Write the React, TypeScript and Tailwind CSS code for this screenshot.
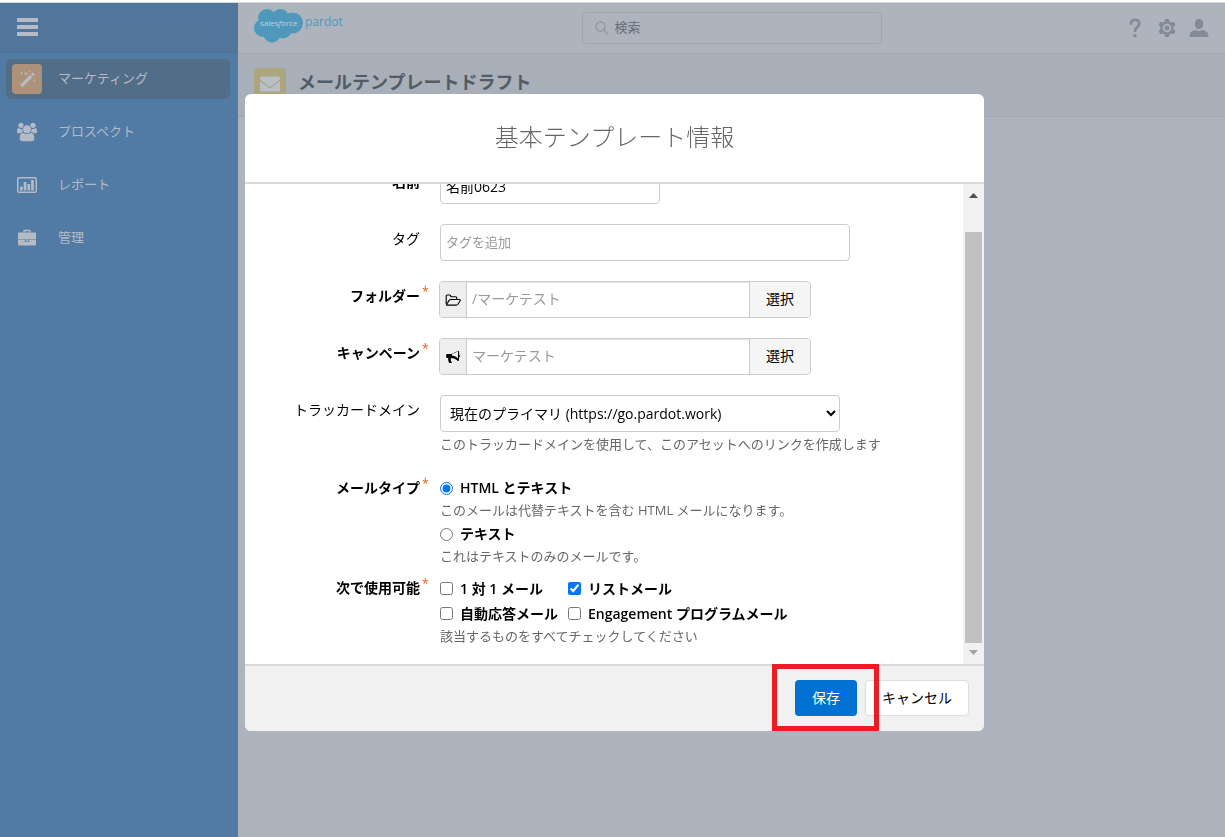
import React from "react";
import { FaEnvelope } from "react-icons/fa";

const WandIcon = () => (
  <svg viewBox="0 0 20 20" className="w-5 h-5" fill="currentColor">
    <path d="M3.600 15.300L13.300 5.600l2.400 2.400L6 17.700a.9.900 0 0 1-1.300 0l-1.100-1.100a.9.900 0 0 1 0-1.300zM14 4.900l1-1a.9.900 0 0 1 1.300 0L17.400 5a.9.900 0 0 1 0 1.300l-1 1z" />
    <path d="M4.600 2.300l.5 1.300 1.300.5-1.300.5-.5 1.300-.5-1.300-1.300-.5 1.300-.5zM9 2l.7 1.900 1.900.7-1.900.7L9 7.200l-.7-1.900-1.900-.7 1.900-.7zM12.600 1.300l.4.900.9.400-.9.400-.4.900-.4-.9-.9-.4.9-.4zM17.200 9.900l.4 1.100 1.100.4-1.100.4-.4 1.100-.4-1.100-1.100-.4 1.100-.4z" />
  </svg>
);

const UsersIcon = () => (
  <svg viewBox="0 0 1920 1792" className="w-5 h-5" fill="currentColor">
    <path d="M593 896q-162 5-265 128h-134q-82 0-138-40.500t-56-118.500q0-353 124-353 6 0 43.500 21t97.500 42.500 119 21.500q67 0 133-23-5 37-5 66 0 139 81 256zM1664 1533q0 120-73 189.500t-194 69.500h-874q-121 0-194-69.500t-73-189.500q0-53 3.500-103.500t14-109 26.500-108.500 43-97.500 62-81 85.500-53.500 111.500-20q10 0 43 21.500t73 48 107 48 135 21.500 135-21.500 107-48 73-48 43-21.500q61 0 111.500 20t85.500 53.500 62 81 43 97.500 26.500 108.500 14 109 3.500 103.500zM640 256q0 106-75 181t-181 75-181-75-75-181 75-181 181-75 181 75 75 181zM1344 640q0 159-112.500 271.500t-271.500 112.500-271.500-112.500-112.500-271.500 112.500-271.500 271.500-112.500 271.500 112.500 112.500 271.500zM1920 865q0 78-56 118.500t-138 40.500h-134q-103-123-265-128 81-117 81-256 0-29-5-66 66 23 133 23 59 0 119-21.500t97.500-42.500 43.500-21q124 0 124 353zM1792 256q0 106-75 181t-181 75-181-75-75-181 75-181 181-75 181 75 75 181z" />
  </svg>
);

const ChartIcon = () => (
  <svg viewBox="0 0 20 20" className="w-5 h-5" fill="currentColor">
    <rect x="0.75" y="2.75" width="18.5" height="14.5" rx="1.2" fill="none" stroke="currentColor" strokeWidth="1.5" />
    <path d="M3 11.500h2.700v4H3zM6.700 7h2.700v8.500H6.700zM10.400 9h2.700v6.500h-2.700zM14.100 5h2.700v10.500h-2.700z" />
  </svg>
);

const BriefcaseIcon = () => (
  <svg viewBox="0 0 20 20" className="w-5 h-5" fill="currentColor">
    <path d="M7 4.500V3.200A.7.700 0 0 1 7.700 2.500h4.600a.7.700 0 0 1 .7.700v1.300" fill="none" stroke="currentColor" strokeWidth="1.500" />
    <path d="M2.200 4.500h15.600c.7 0 1.200.5 1.200 1.200V11.300H1V5.700c0-.7.5-1.200 1.200-1.200zM1 11.800h6.800v1.900h4.400v-1.900H19v4.500c0 .7-.5 1.200-1.200 1.200H2.200c-.7 0-1.200-.5-1.200-1.200zM8.700 11.800h2.600v1.100H8.700z" />
  </svg>
);

const FolderIcon = () => (
  <svg viewBox="0 0 16 14" className="w-4 h-3.5" fill="none" stroke="currentColor" strokeWidth="1.100" strokeLinejoin="round">
    <path d="M1.200 11V3.200c0-.7.5-1.200 1.200-1.200h2.200c.7 0 1.200.5 1.200 1.200v.6h4.800c.7 0 1.200.5 1.200 1.200v1.500" />
    <path d="M1.400 11.700l2.700-4.300c.4-.6.9-.9 1.600-.9h8.600c.9 0 1.200.5.8 1.200l-2.200 3.500c-.4.600-1 .9-1.700.9H2.200c-.8 0-1-.1-.8-.4z" />
  </svg>
);

const BullhornIcon = () => (
  <svg viewBox="0 0 1792 1792" className="w-3.5 h-3.5" fill="currentColor">
    <path d="M1664 640q53 0 90.500 37.500t37.500 90.500-37.500 90.500-90.500 37.500v384q0 52-38 90t-90 38q-417-347-812-380-58 19-91 66t-31 100.500 40 92.500q-20 33-23 65.500t6 58 33.500 55 48 50 61.500 50.500q-29 58-111.500 83t-168.500 11.500-113.500-55.500q-7-23-29.500-87.500t-32-94.500-23-89-15-101 3.500-98.500 22-110.500h-122q-66 0-113-47t-47-113v-192q0-66 47-113t113-47h480q435 0 896-384 52 0 90 38t38 90v384zM1536 1052v-954q-394 302-768 343v270q377 42 768 341z" />
  </svg>
);

const HelpIcon = () => (
  <svg viewBox="0 0 20 20" className="w-5 h-5" fill="none" stroke="currentColor" strokeWidth="2.800" strokeLinecap="round">
    <path d="M5.800 5.600C6.200 3.200 7.700 1.900 10 1.900c2.500 0 4.200 1.500 4.200 3.800 0 3.400-4.200 3.500-4.200 7.100" />
    <circle cx="10" cy="17.800" r="1.700" fill="currentColor" stroke="none" />
  </svg>
);

const GearIcon = () => (
  <svg viewBox="0 0 20 20" className="w-5 h-5" fill="currentColor">
    <path
      fillRule="evenodd"
      d="M8.300 1h3.400l.7 2.600 1.600.9 2.600-.8 1.900 3-1.800 2v2.600l1.800 2-1.900 3-2.600-.8-1.600.9-.7 2.600H8.300l-.7-2.600-1.600-.9-2.600.8-1.900-3 1.800-2V8.700l-1.800-2 1.900-3 2.600.8 1.600-.9zM10 5.700a4.300 4.300 0 1 0 0 8.600 4.300 4.300 0 0 0 0-8.600z"
    />
    <circle cx="10" cy="10" r="2.500" />
  </svg>
);

const UserIcon = () => (
  <svg viewBox="0 0 20 20" className="w-5 h-5" fill="currentColor">
    <ellipse cx="10" cy="6" rx="4.300" ry="5.200" />
    <path d="M1.500 19c-.8 0-1-.5-1-1.200 0-3 2.300-5.300 6.200-5.800 2 1.300 4.600 1.300 6.600 0 3.900.5 6.200 2.800 6.200 5.800 0 .7-.2 1.200-1 1.200z" />
  </svg>
);

const Logo = () => (
  <svg viewBox="0 0 90 36" className="w-[90px] h-9" role="img" aria-label="salesforce pardot">
    <g fill="#4f97bb">
      <circle cx="13" cy="11" r="9" />
      <circle cx="26.500" cy="10" r="8" />
      <circle cx="38.500" cy="16" r="10.500" />
      <circle cx="9" cy="21" r="9" />
      <circle cx="18" cy="27" r="8.500" />
      <circle cx="29" cy="23" r="8.500" />
      <circle cx="24" cy="18" r="9" />
    </g>
    <text x="6" y="19" fontSize="8" fontFamily="Open Sans, sans-serif" fill="#c3ced9">
      sales<tspan fontStyle="italic">f</tspan>orce
    </text>
    <text x="51" y="19" fontSize="12" fontFamily="Open Sans, sans-serif" fill="#4f97bb">
      pardot
    </text>
  </svg>
);

const menu = [
  { label: "マーケティング", icon: <WandIcon />, active: true },
  { label: "プロスペクト", icon: <UsersIcon /> },
  { label: "レポート", icon: <ChartIcon /> },
  { label: "管理", icon: <BriefcaseIcon /> },
];

const Sidebar = () => (
  <aside className="w-[238px] shrink-0 bg-[#517ba4] text-[#b4bbc5]">
    <div className="h-[50px] flex items-center pl-[17px] pb-0.5 bg-[#52769b] border-b border-[#4f7397]">
      <button type="button" aria-label="メニュー" className="flex flex-col gap-[3px]">
        <span className="w-[21px] h-1 bg-[#b4bbc5]" />
        <span className="w-[21px] h-1 bg-[#b4bbc5]" />
        <span className="w-[21px] h-1 bg-[#b4bbc5]" />
      </button>
    </div>
    <nav className="flex flex-col gap-[13px] pt-1.5 pl-1.5 pr-2">
      {menu.map((item) => (
        <a
          key={item.label}
          href="#"
          className={`h-10 flex items-center gap-4 px-1.5 rounded-md text-[13px] ${item.active ? "bg-[#526d87]" : ""}`}
        >
          <span
            className={`w-[30px] h-[30px] flex items-center justify-center rounded-sm ${item.active ? "bg-[#ad9179]" : ""}`}
          >
            {item.icon}
          </span>
          {item.label}
        </a>
      ))}
    </nav>
  </aside>
);

const Header = () => (
  <header className="h-[50px] flex items-center justify-between pl-3.5 pr-4 text-[#828b96]">
    <div className="flex-1 pb-1.5 pl-0.5">
      <Logo />
    </div>
    <label className="w-[300px] h-8 flex items-center gap-1.5 px-3 rounded border border-[#a0a7b1]">
      <svg viewBox="0 0 14 14" className="w-3.5 h-3.5 shrink-0" fill="none" stroke="#929aa4" strokeWidth="1.500">
        <circle cx="5.500" cy="5.500" r="4.500" />
        <path d="M9 9l4 4" />
      </svg>
      <input
        type="text"
        placeholder="検索"
        aria-label="検索"
        className="w-full bg-transparent text-[13px] outline-none placeholder:text-[#666d76]"
      />
    </label>
    <div className="flex-1 flex justify-end gap-3">
      <button type="button" aria-label="ヘルプ"><HelpIcon /></button>
      <button type="button" aria-label="設定"><GearIcon /></button>
      <button type="button" aria-label="ユーザー"><UserIcon /></button>
    </div>
  </header>
);

const Row = ({ label, htmlFor, required, compact, children }: any) => (
  <div className="flex gap-5">
    <div className={`w-[175px] shrink-0 text-right leading-6 ${compact ? "" : "pt-[3px]"}`}>
      <label htmlFor={htmlFor} className={`relative ${required ? "font-semibold" : ""}`}>
        {label}
        {required && <span className="absolute left-full -top-1.5 pl-0.5 text-[#e8772a] text-xs leading-6">*</span>}
      </label>
    </div>
    <div className="flex-1">{children}</div>
  </div>
);

const Help = ({ children }: any) => (
  <p className="mb-0.5 text-[13px] leading-5 text-[#666]">{children}</p>
);

const Picker = ({ id, icon, value }: any) => (
  <div className="-ml-px max-w-[372px] h-[37px] flex rounded border border-[#ccc] overflow-hidden">
    <span className="w-[27px] shrink-0 flex items-center justify-center bg-[#eee] border-r border-[#ccc]">{icon}</span>
    <input
      id={id}
      type="text"
      readOnly
      defaultValue={value}
      className="flex-1 min-w-0 px-[5px] pb-0.5 text-[#999] shadow-[inset_0_1px_1px_#e4e4e4] outline-none"
    />
    <button type="button" className="w-[61px] pb-0.5 bg-[#f5f5f5] border-l border-[#ccc]">選択</button>
  </div>
);

const Check = ({ label, ...props }: any) => (
  <label className="flex items-center gap-[7px] font-semibold whitespace-nowrap">
    <input {...props} className="w-[13px] h-[13px] shrink-0 accent-[#0075ff]" />
    {label}
  </label>
);

const Scrollbar = () => (
  <div className="w-[21px] shrink-0 flex flex-col items-center bg-[#f1f1f1]" aria-hidden="true">
    <svg viewBox="0 0 9 5" className="w-[9px] h-[5px] mt-[9px] mb-[34px]" fill="#505050">
      <path d="M0 5L4.500 0L9 5z" />
    </svg>
    <div className="w-[17px] flex-1 bg-[#c1c1c1]" />
    <svg viewBox="0 0 9 5" className="w-[9px] h-[5px] mt-[7px] mb-[9px]" fill="#a3a3a3">
      <path d="M0 0L4.500 5L9 0z" />
    </svg>
  </div>
);

const Modal = () => (
  <div role="dialog" aria-labelledby="modal-title" className="w-full max-w-[739px] rounded-md bg-white text-black text-sm overflow-hidden">
    <h2 id="modal-title" className="h-[88px] flex items-center justify-center pb-0.5 text-2xl font-light text-[#666]">
      基本テンプレート情報
    </h2>

    <div className="h-[482px] flex border-t-2 border-[#d9d9d9]">
      <form className="flex-1 flex flex-col justify-end gap-2 pb-4 overflow-hidden">
        <div className="flex flex-col gap-5">
          <Row label="名前" htmlFor="name" required>
            <input id="name" type="text" defaultValue="名前0623" className="block w-[220px] h-[37px] px-[5px] rounded border border-[#ccc]" />
          </Row>
          <Row label="タグ" htmlFor="tags">
            <input
              id="tags"
              type="text"
              placeholder="タグを追加"
              className="block w-[410px] h-[37px] px-[5px] pb-0.5 text-[13px] rounded border border-[#ccc] placeholder:text-[#999]"
            />
          </Row>
          <Row label="フォルダー" htmlFor="folder" required>
            <Picker id="folder" icon={<FolderIcon />} value="/マーケテスト" />
          </Row>
          <Row label="キャンペーン" htmlFor="campaign" required>
            <Picker id="campaign" icon={<BullhornIcon />} value="マーケテスト" />
          </Row>
          <Row label="トラッカードメイン" htmlFor="domain">
            <select id="domain" className="block w-[400px] h-[37px] px-[5px] mb-0.5 rounded border border-[#ccc] bg-white">
              <option>現在のプライマリ (https://go.pardot.work)</option>
            </select>
            <Help>このトラッカードメインを使用して、このアセットへのリンクを作成します</Help>
          </Row>
          <Row label="メールタイプ" htmlFor="type-html" required compact>
            <div className="leading-6">
              <Check id="type-html" type="radio" name="type" defaultChecked label="HTML とテキスト" />
              <Help>このメールは代替テキストを含む HTML メールになります。</Help>
              <Check type="radio" name="type" label="テキスト" />
              <Help>これはテキストのみのメールです。</Help>
            </div>
          </Row>
        </div>
        <Row label="次で使用可能" htmlFor="use-one" required compact>
          <div className="grid grid-cols-[128px_auto] justify-start leading-[25px]">
            <Check id="use-one" type="checkbox" label="1 対 1 メール" />
            <Check type="checkbox" defaultChecked label="リストメール" />
            <Check type="checkbox" label="自動応答メール" />
            <Check type="checkbox" label="Engagement プログラムメール" />
          </div>
          <Help>該当するものをすべてチェックしてください</Help>
        </Row>
      </form>
      <Scrollbar />
    </div>

    <div className="relative h-[67px] flex items-center justify-end gap-2 px-[15px] pb-0.5 border-t-2 border-[#d9d9d9] bg-[#f1f1f1]">
      <button type="button" className="h-9 px-[17px] rounded bg-[#0070d2] text-white">保存</button>
      <button type="button" className="h-9 px-4 rounded border border-[#ddd] bg-white">キャンセル</button>
      {/* highlight around the save button */}
      <div className="absolute -top-0.5 bottom-0 right-[105px] w-[107px] border-5 border-[#ed1c24]" />
    </div>
  </div>
);

const App = () => {
  return (
    <div className="min-h-screen flex flex-col bg-[#adb4be] font-['Open_Sans','Noto_Sans_CJK_JP',sans-serif]" lang="ja">
      <div className="h-[3px] bg-white border-b border-[#d5d8dc]" />
      <div className="flex-1 flex">
        <Sidebar />
        <main className="flex-1">
          <Header />
          <div className="h-16 flex items-start gap-3 pl-4 pt-3.5 bg-[#a8afb9] border-t border-b border-[#a1a8b2]">
            <span className="w-8 h-8 flex items-center justify-center rounded bg-[#aca67f] text-[#b9bfc6]">
              <FaEnvelope className="w-5 h-5" />
            </span>
            <h1 className="text-lg leading-7 font-semibold text-[#535b64]">メールテンプレートドラフト</h1>
          </div>
        </main>
      </div>

      <div className="fixed inset-0 flex items-start justify-center pt-[94px] pl-1">
        <Modal />
      </div>
    </div>
  );
};

export default App;
